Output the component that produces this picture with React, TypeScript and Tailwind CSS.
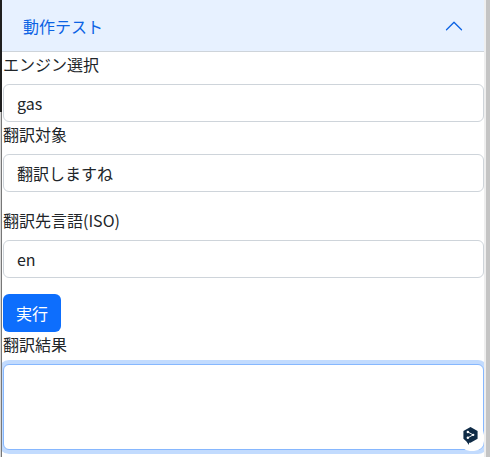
import React from 'react';

function Field({ label, value }: { label: string; value: string }) {
  return (
    <div>
      <label className="block leading-[24px] mb-2">{label}</label>
      <input
        readOnly
        value={value}
        className="block w-full h-[38px] px-[13px] rounded-[6px] border border-[#ced4da] bg-white text-[#212529] outline-none"
      />
    </div>
  );
}

export default function App() {
  return (
    <div className="h-[457px] w-[490px] overflow-hidden bg-white flex text-[16px] text-[#212529] font-['Noto_Sans_CJK_JP','Noto_Sans',sans-serif]">
      {/* window edge on the left */}
      <div className="w-[2px] shrink-0 flex flex-col">
        <div className="h-[112px] bg-[#1f1f1f]" />
        <div className="flex-1 bg-[#777777] border-l border-[#d8d8d8]" />
      </div>
      <div className="w-[482px] shrink-0">
        {/* Accordion header */}
        <div className="flex items-center justify-between h-[52px] pl-[21px] pr-[20px] bg-[#e7f1ff] border-b border-[#ced4da] text-[#0c63e4]">
          <span>動作テスト</span>
          <svg width="20" height="20" viewBox="0 0 16 16" fill="#0c63e4">
            <path
              fillRule="evenodd"
              d="M1.646 11.354a.5.5 0 0 0 .708 0L8 5.707l5.646 5.647a.5.5 0 0 0 .708-.708l-6-6a.5.5 0 0 0-.708 0l-6 6a.5.5 0 0 0 0 .708z"
            />
          </svg>
        </div>

        <div className="pl-px overflow-x-clip">
          <Field label="エンジン選択" value="gas" />
          <Field label="翻訳対象" value="翻訳しますね" />
          <div className="mt-[16px]">
            <Field label="翻訳先言語(ISO)" value="en" />
          </div>
          <button className="block mt-[16px] h-[38px] px-[13px] rounded-[6px] bg-[#0d6efd] text-white">実行</button>
          <label className="block leading-[24px] mb-2">翻訳結果</label>
          <div className="relative">
            <textarea
              readOnly
              className="block w-full h-[86px] rounded-[6px] border border-[#86b7fe] bg-white outline-none resize-none shadow-[0_0_0_4px_rgba(13,110,253,0.25)]"
            />
            {/* Translation extension badge */}
            <div className="absolute right-0 bottom-[-1px] w-[24px] h-[26px] flex items-start justify-start pl-[2px] rounded-[10px] bg-white">
              <svg width="17" height="20" viewBox="0 0 18 21" className="mt-[1px]">
                <path d="M9 1 16.5 5.2V13.4L9 17.6 7.4 17.6V20L4.5 16 1.5 13.4V5.2Z" fill="#0f2b46" />
                <path d="M6.2 6.2 11.8 9.3 6.2 12.4" fill="none" stroke="#ffffff" strokeWidth="1" />
                <circle cx="6.2" cy="6.2" r="1.3" fill="#ffffff" />
                <circle cx="11.8" cy="9.3" r="1.3" fill="#ffffff" />
                <circle cx="6.2" cy="12.4" r="1.3" fill="#ffffff" />
              </svg>
            </div>
          </div>
        </div>
      </div>
      <div className="w-[2px] shrink-0 bg-[#eeeeee]" />
      <div className="w-[4px] shrink-0 bg-[#c4c4c4]" />
    </div>
  );
}
